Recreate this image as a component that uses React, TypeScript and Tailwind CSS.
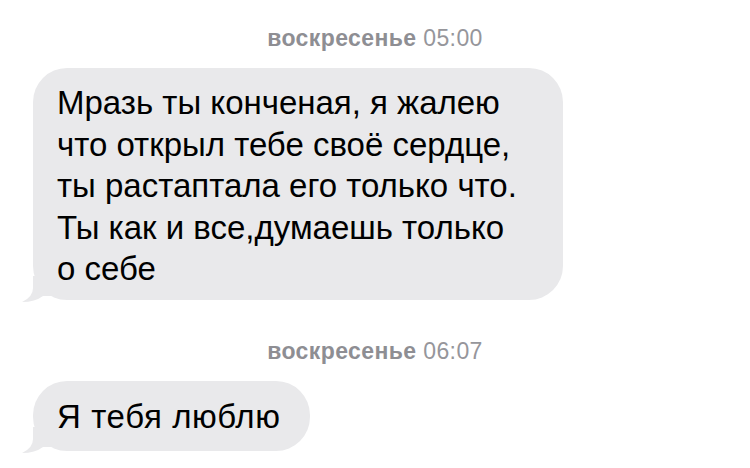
import React from "react";

type Message = {
  day: string;
  time: string;
  lines: string[];
  width: string;
};

const messages: Message[] = [
  {
    day: "воскресенье",
    time: "05:00",
    lines: [
      "Мразь ты конченая, я жалею",
      "что открыл тебе своё сердце,",
      "ты растаптала его только что.",
      "Ты как и все,думаешь только",
      "о себе",
    ],
    width: "w-[530px]",
  },
  {
    day: "воскресенье",
    time: "06:07",
    lines: ["Я тебя люблю"],
    width: "w-[277px]",
  },
];

function Tail() {
  // little hook on the lower-left corner of an incoming bubble
  return (
    <svg
      className="absolute bottom-[-2px] left-[-11px]"
      width="34"
      height="26"
      viewBox="0 0 34 26"
    >
      <path
        d="M11 0 L11 12 Q11 21 0 26 Q13 26 21 20 L34 20 L34 0 Z"
        fill="#e9e9eb"
      />
    </svg>
  );
}

function Stamp({ day, time }: { day: string; time: string }) {
  return (
    <div className="text-center text-[23px] leading-[26px] tracking-[0.4px] text-[#8e8e93]">
      <span className="font-semibold">{day}</span>{" "}
      <span className="font-normal text-[#96969b]">{time}</span>
    </div>
  );
}

export default function App() {
  return (
    <div
      className="h-[468px] w-[750px] overflow-hidden bg-white pl-[33px] pt-[25px]"
      style={{ fontFamily: '"Liberation Sans", Arial, sans-serif' }}
    >
      <div className="-ml-[33px]">
        <Stamp day={messages[0].day} time={messages[0].time} />
      </div>
      <div
        className={`relative mt-[17px] ${messages[0].width} rounded-[34px] bg-[#e9e9eb] pb-[10px] pl-[24px] pt-[14px] text-[33px] leading-[41.5px] text-black`}
      >
        <Tail />
        <div className="relative">
          {messages[0].lines.map((l) => (
            <div key={l}>{l}</div>
          ))}
        </div>
      </div>

      <div className="-ml-[33px] mt-[38px]">
        <Stamp day={messages[1].day} time={messages[1].time} />
      </div>
      <div
        className={`relative mt-[17px] ${messages[1].width} rounded-[34px] bg-[#e9e9eb] pb-[14px] pl-[24px] pt-[15px] text-[33px] leading-[41.5px] text-black`}
      >
        <Tail />
        <div className="relative tracking-[0.6px]">{messages[1].lines[0]}</div>
      </div>
    </div>
  );
}
